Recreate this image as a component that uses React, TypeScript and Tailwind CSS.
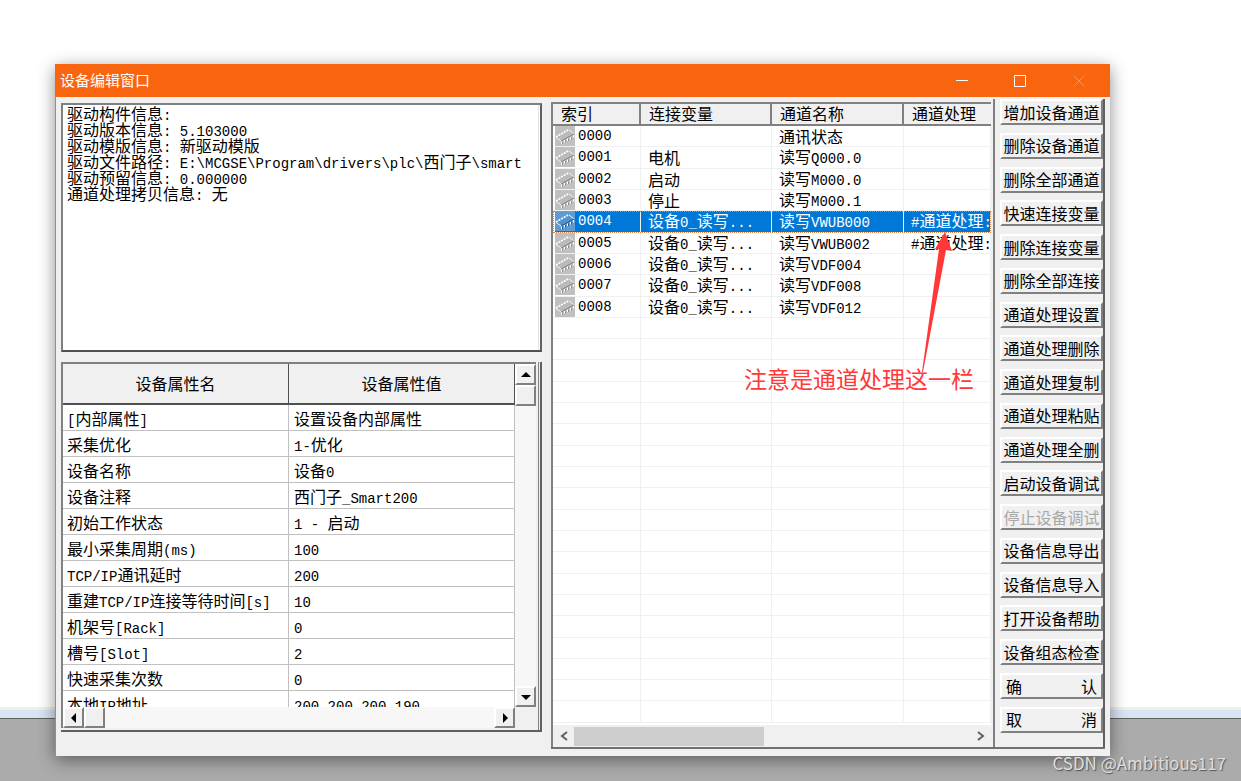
import { Fragment, useState } from 'react';
import type { ReactNode } from 'react';
import clsx from 'clsx';

type Channel = {
  index: string;
  variable: string;
  name: string;
  process: string;
};

const DRIVER_INFO = [
  '驱动构件信息:',
  '驱动版本信息: 5.103000',
  '驱动模版信息: 新驱动模版',
  '驱动文件路径: E:\\MCGSE\\Program\\drivers\\plc\\西门子\\smart',
  '驱动预留信息: 0.000000',
  '通道处理拷贝信息: 无',
];

const PROPERTIES = [
  ['[内部属性]', '设置设备内部属性'],
  ['采集优化', '1-优化'],
  ['设备名称', '设备0'],
  ['设备注释', '西门子_Smart200'],
  ['初始工作状态', '1 - 启动'],
  ['最小采集周期(ms)', '100'],
  ['TCP/IP通讯延时', '200'],
  ['重建TCP/IP连接等待时间[s]', '10'],
  ['机架号[Rack]', '0'],
  ['槽号[Slot]', '2'],
  ['快速采集次数', '0'],
  ['本地IP地址', '200.200.200.190'],
];

const CHANNELS: Channel[] = [
  { index: '0000', variable: '', name: '通讯状态', process: '' },
  { index: '0001', variable: '电机', name: '读写Q000.0', process: '' },
  { index: '0002', variable: '启动', name: '读写M000.0', process: '' },
  { index: '0003', variable: '停止', name: '读写M000.1', process: '' },
  { index: '0004', variable: '设备0_读写...', name: '读写VWUB000', process: '#通道处理:' },
  { index: '0005', variable: '设备0_读写...', name: '读写VWUB002', process: '#通道处理:' },
  { index: '0006', variable: '设备0_读写...', name: '读写VDF004', process: '' },
  { index: '0007', variable: '设备0_读写...', name: '读写VDF008', process: '' },
  { index: '0008', variable: '设备0_读写...', name: '读写VDF012', process: '' },
];

const EMPTY_ROWS = Array.from({ length: 19 }, (_, i) => i);

const ACTIONS = [
  '增加设备通道',
  '删除设备通道',
  '删除全部通道',
  '快速连接变量',
  '删除连接变量',
  '删除全部连接',
  '通道处理设置',
  '通道处理删除',
  '通道处理复制',
  '通道处理粘贴',
  '通道处理全删',
  '启动设备调试',
  '停止设备调试',
  '设备信息导出',
  '设备信息导入',
  '打开设备帮助',
  '设备组态检查',
  '确认',
  '取消',
];

// Latin runs are set in a monospaced face, a little smaller than the Chinese text
function Mixed({ text }: { text: string }) {
  return (
    <>
      {text.split(/([\x20-\x7e]+)/).map((part, i) =>
        i % 2 ? (
          <span key={i} className="font-['Liberation_Mono',monospace] text-[14px] leading-none">{part}</span>
        ) : (
          <Fragment key={i}>{part}</Fragment>
        ),
      )}
    </>
  );
}

function ChipIcon({ selected }: { selected: boolean }) {
  return (
    <svg viewBox="0 0 20 20" className="block h-5 w-5 flex-none" aria-hidden="true">
      <rect width="20" height="20" fill={selected ? '#5f9bd0' : '#c0c0c0'} />
      <path d="M1 11.5 L14 4 L19 7.500 L6 15 Z" fill={selected ? '#4f93cf' : '#bababa'} />
      <path d="M1 11 L14 3.500" fill="none" stroke="#fff" strokeWidth="1.500" strokeDasharray="2 1" />
      <path d="M14 4 L19 8M1 11.5 L6 15" fill="none" stroke="#f4f4f4" />
      <path d="M6 15 L19 8" fill="none" stroke={selected ? '#24598a' : '#808080'} />
      <path d="M6.500 15.500v2.500M9.500 14v2.500M12.500 12.500v2.500M15.500 11v2.500M18.500 9v2.500" fill="none" stroke="#fff" />
      <path d="M7.500 15.500v2.500M10.500 14v2.500M13.500 12.500v2.500M16.500 11v2.500" fill="none" stroke={selected ? '#24598a' : '#909090'} />
    </svg>
  );
}

function ScrollButton({ label, path }: { label: string; path: string }) {
  return (
    <button
      type="button"
      aria-label={label}
      className="flex h-[21px] w-[21px] flex-none items-center justify-center border-2 border-t-white border-r-[#808080] border-b-[#808080] border-l-white bg-[#f0f0f0]"
    >
      <svg viewBox="0 0 10 10" className="h-[10px] w-[10px]" aria-hidden="true">
        <path d={path} fill="#000" />
      </svg>
    </button>
  );
}

function ScrollThumb() {
  return <div className="h-[21px] w-[21px] flex-none border-2 border-t-white border-r-[#808080] border-b-[#808080] border-l-white bg-[#f0f0f0]" />;
}

function TitleBar() {
  return (
    <header className="flex h-[33px] flex-none items-center bg-[#f9640f] pl-[5px] text-white">
      <h1 className="flex-1 pb-[2px] text-[15px] leading-5">设备编辑窗口</h1>
      <button type="button" aria-label="最小化" className="flex h-full w-[58px] items-center justify-center pr-[3px]">
        <svg viewBox="0 0 12 12" className="h-3 w-3" aria-hidden="true">
          <path d="M0 5.5h12" stroke="#fff" />
        </svg>
      </button>
      <button type="button" aria-label="最大化" className="flex h-full w-[58px] items-center justify-center pr-[3px]">
        <svg viewBox="0 0 12 12" className="h-3 w-3" aria-hidden="true">
          <path d="M.5 .5h11v11h-11z" fill="none" stroke="#fff" />
        </svg>
      </button>
      <button type="button" aria-label="关闭" className="flex h-full w-[60px] items-center justify-center pr-[3px]">
        <svg viewBox="0 0 12 12" className="h-3 w-3" aria-hidden="true">
          <path d="M.5 .5l11 11M11.5 .5l-11 11" stroke="#fb9257" />
        </svg>
      </button>
    </header>
  );
}

function DriverInfo() {
  return (
    <section className="h-[249px] flex-none border-2 border-t-[#808080] border-r-[#606060] border-b-[#505050] border-l-[#808080] bg-white pr-px">
      <div className="h-full border-r border-[#e3e3e3] pl-1">
        {DRIVER_INFO.map((line) => (
          <p key={line} className="h-4 leading-4 whitespace-pre">
            <Mixed text={line} />
          </p>
        ))}
      </div>
    </section>
  );
}

function PropertyGrid() {
  return (
    <section className="mt-[10px] flex min-h-0 flex-1 border-r-2 border-b-2 border-[#606060] pr-px">
      <div className="flex min-h-0 min-w-0 flex-1 border-r border-[#808080] pr-[2px] pb-[2px]">
        <div className="flex min-h-0 min-w-0 flex-1 border-t-2 border-l-2 border-[#808080]">
          <div className="flex min-w-0 flex-1 flex-col">
            <div className="min-h-0 flex-1 overflow-hidden bg-white">
              <table className="w-full table-fixed border-separate border-spacing-0">
                <thead>
                  <tr className="h-[41px] bg-[#f0f0f0]">
                    <th className="border-r border-b-2 border-[#505050] p-0 pb-[2px] font-normal">设备属性名</th>
                    <th className="border-r border-b-2 border-[#505050] p-0 pb-[2px] font-normal">设备属性值</th>
                  </tr>
                </thead>
                <tbody>
                  {PROPERTIES.map(([name, value]) => (
                    <tr key={name} className="h-[26px]">
                      <td className="border-r border-b border-[#c0c0c0] p-0 pl-[4px] leading-5 whitespace-pre">
                        <Mixed text={name} />
                      </td>
                      <td className="border-r border-b border-[#c0c0c0] p-0 pl-[5px] leading-5 whitespace-pre">
                        <Mixed text={value} />
                      </td>
                    </tr>
                  ))}
                </tbody>
              </table>
            </div>
            <div className="flex flex-none bg-[#f7f7f7]">
              <ScrollButton label="向左滚动" path="M7 0v10L2 5z" />
              <ScrollThumb />
              <div className="flex-1" />
              <ScrollButton label="向右滚动" path="M3 0v10l5-5z" />
            </div>
          </div>
          <div className="flex flex-none flex-col bg-[#f7f7f7]">
            <ScrollButton label="向上滚动" path="M0 7h10L5 2z" />
            <ScrollThumb />
            <div className="flex-1" />
            <ScrollButton label="向下滚动" path="M0 3h10L5 8z" />
            <div className="h-[21px] bg-[#f0f0f0]" />
          </div>
        </div>
      </div>
    </section>
  );
}

function Cell({ children, selected }: { children?: ReactNode; selected?: boolean }) {
  return (
    <td
      className={clsx(
        'overflow-hidden border-r border-b border-[#f0f0f0] p-0 pl-[7px] leading-4 whitespace-pre',
        selected && 'bg-[#0078d7] text-white',
      )}
    >
      {children}
    </td>
  );
}

function ChannelList() {
  const [current, setCurrent] = useState('0004');

  return (
    <section className="relative flex min-w-0 flex-col pr-[2px]">
      <div className="mt-[5px] flex min-h-0 flex-1 flex-col border-t-2 border-l-2 border-[#808080]">
        <div className="min-h-0 flex-1 overflow-hidden bg-white pb-[2px]">
          <table className="h-full w-full table-fixed border-separate border-spacing-0">
            <colgroup>
              <col className="w-[88px]" />
              <col className="w-[131px]" />
              <col className="w-[132px]" />
              <col />
            </colgroup>
            <thead>
              <tr className="h-[22px] bg-[#f0f0f0] text-left">
                {['索引', '连接变量', '通道名称', '通道处理'].map((label) => (
                  <th
                    key={label}
                    className="border-r-2 border-b-2 border-[#808080] p-0 pb-[2px] pl-2 leading-4 font-normal whitespace-nowrap last:border-r-0"
                  >
                    {label}
                  </th>
                ))}
              </tr>
            </thead>
            <tbody>
              {CHANNELS.map((row) => {
                const selected = row.index === current;
                return (
                  <tr
                    key={row.index}
                    className={clsx('h-[21px]', selected && 'outline-1 -outline-offset-1 outline-[#d08a50] outline-dotted')}
                    onClick={() => setCurrent(row.index)}
                  >
                    <td
                      className={clsx(
                        'border-r border-b border-l-2 border-[#f0f0f0] border-l-white p-0 leading-4',
                        selected && 'bg-[#0078d7] text-white',
                      )}
                    >
                      <div className="flex items-center gap-[3px]">
                        <ChipIcon selected={selected} />
                        <Mixed text={row.index} />
                      </div>
                    </td>
                    <Cell selected={selected}><Mixed text={row.variable} /></Cell>
                    <Cell selected={selected}><Mixed text={row.name} /></Cell>
                    <Cell selected={selected}><Mixed text={row.process} /></Cell>
                  </tr>
                );
              })}
              {EMPTY_ROWS.map((i) => (
                <tr key={i} className="h-[21px]">
                  <Cell />
                  <Cell />
                  <Cell />
                  <Cell />
                </tr>
              ))}
            </tbody>
          </table>
        </div>
        <div className="flex h-[22px] flex-none items-center bg-[#f0f0f0]">
          <button type="button" aria-label="向左滚动" className="flex h-full w-[21px] items-center justify-center">
            <svg viewBox="0 0 8 10" className="h-[10px] w-2" aria-hidden="true">
              <path d="M7 1L2 5l5 4" fill="none" stroke="#606060" strokeWidth="2" />
            </svg>
          </button>
          <div className="flex h-[19px] flex-1">
            <div className="w-[48%] bg-[#cdcdcd]" />
          </div>
          <button type="button" aria-label="向右滚动" className="flex h-full w-[21px] items-center justify-center">
            <svg viewBox="0 0 8 10" className="h-[10px] w-2" aria-hidden="true">
              <path d="M1 1l5 4-5 4" fill="none" stroke="#606060" strokeWidth="2" />
            </svg>
          </button>
        </div>
      </div>

      {/* callout over the list */}
      <svg viewBox="0 0 32 142" className="pointer-events-none absolute top-[134px] left-[370px] h-[142px] w-8" aria-hidden="true">
        <path d="M24 1L31 20L25 19L2 141L1 141L18 18L14 18Z" fill="#ff3838" />
      </svg>
      <p className="pointer-events-none absolute top-[265px] left-[193px] text-[23px] leading-8 whitespace-nowrap text-[#ff3838]">
        注意是通道处理这一栏
      </p>
    </section>
  );
}

function ActionPanel() {
  return (
    <aside className="mt-[2px] flex flex-col justify-between border-r-2 border-l-2 border-r-[#606060] border-l-[#808080] pb-[14px] pl-[5px]">
      {ACTIONS.map((label) => (
        <button
          key={label}
          type="button"
          disabled={label === '停止设备调试'}
          className={clsx(
            'flex h-[26px] w-full items-center border-2 border-t-white border-r-[#808080] border-b-[#808080] border-l-white bg-[#f0f0f0] pb-px leading-5 whitespace-nowrap disabled:text-[#a8a8a8]',
            label.length === 2 ? 'justify-between px-1' : 'justify-center',
          )}
        >
          {label.length === 2 ? [...label].map((char) => <span key={char}>{char}</span>) : label}
        </button>
      ))}
    </aside>
  );
}

export default function App() {
  return (
    <div className="relative flex h-screen min-h-[640px] flex-col overflow-hidden bg-white font-['Noto_Sans_CJK_SC',sans-serif] text-[16px] text-black">
      <div className="absolute inset-0 flex flex-col">
        <div className="flex-1" />
        <div className="h-[3px] bg-[#efefef]" />
        <div className="h-2 bg-[#d7e4f2]" />
        <div className="h-[63px] border-t border-[#606060] bg-[#ababab]" />
      </div>

      <main className="relative mt-16 mr-[131px] mb-[25px] ml-[55px] flex min-h-0 flex-1 flex-col bg-[#f0f0f0] shadow-[0_4px_16px_rgba(0,0,0,0.45)]">
        <TitleBar />
        <div className="flex min-h-0 flex-1 flex-col border-l border-[#e8762f] pr-[5px] pb-[7px] pl-[5px]">
          <div className="grid min-h-0 flex-1 grid-cols-[minmax(0,490fr)_minmax(0,442fr)_112px] grid-rows-[minmax(0,1fr)]">
            <div className="mr-[9px] mb-[17px] flex min-h-0 flex-col pt-[6px]">
              <DriverInfo />
              <PropertyGrid />
            </div>
            <div className="col-span-2 grid min-h-0 grid-cols-[minmax(0,1fr)_112px] grid-rows-[minmax(0,1fr)] border-b-2 border-[#707070]">
              <ChannelList />
              <ActionPanel />
            </div>
          </div>
        </div>
      </main>

      <p className="absolute right-[15px] bottom-[6px] text-[17px] leading-6 text-[#dedede] [text-shadow:1px_1px_1px_#555]">
        CSDN @Ambitious117
      </p>
    </div>
  );
}
